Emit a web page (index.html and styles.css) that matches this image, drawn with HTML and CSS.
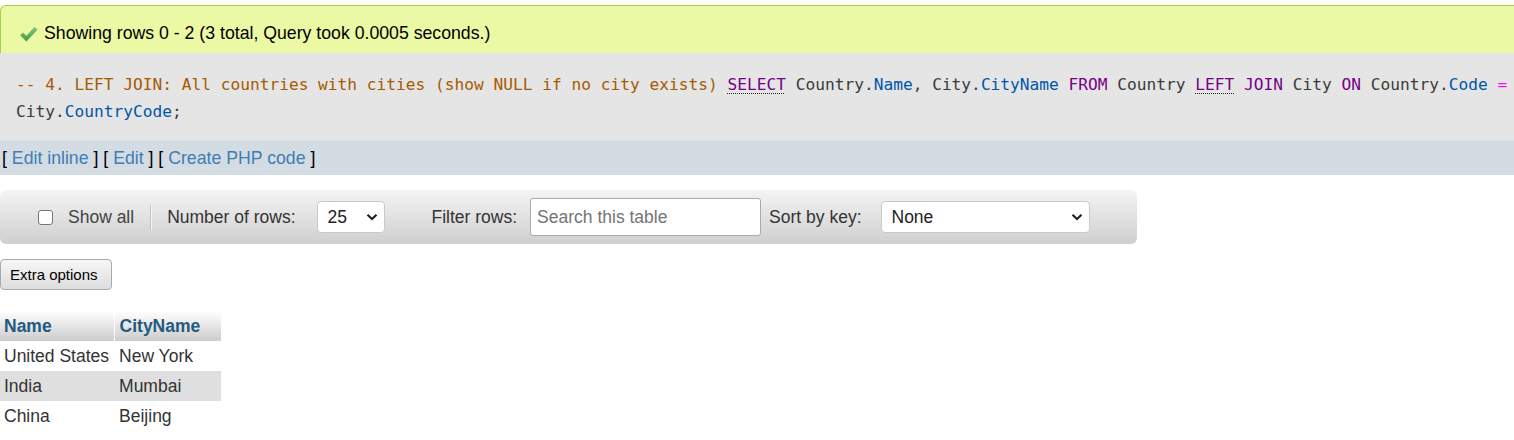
FILE: index.html
```html
<!DOCTYPE html>
<html lang="en">
<head>
<meta charset="utf-8">
<title>Query result</title>
<link rel="stylesheet" href="styles.css">
</head>
<body>
<div class="success">
  <svg class="check" width="19" height="17" viewBox="0 0 19 17" aria-hidden="true">
    <defs>
      <linearGradient id="cg" x1="0" y1="0" x2="0" y2="1">
        <stop offset="0" stop-color="#7fcf7a"/>
        <stop offset="1" stop-color="#3f9a45"/>
      </linearGradient>
    </defs>
    <path d="M1.5 9.2 L4 6.9 L7.3 10.2 L15.6 1.4 L18 3.7 L7.4 15.2 Z" fill="url(#cg)" stroke="#4a9d4c" stroke-width="0.6" stroke-linejoin="round"/>
  </svg>
  <span>Showing rows 0 - 2 (3 total, Query took 0.0005 seconds.)</span>
</div>

<div class="sql"><span class="c-comment">-- 4. LEFT JOIN: All countries with cities (show NULL if no city exists)</span> <span class="c-kw c-doc">SELECT</span> Country.<span class="c-var">Name</span>, City.<span class="c-var">CityName</span> <span class="c-kw">FROM</span> Country <span class="c-kw c-doc">LEFT</span> <span class="c-kw">JOIN</span> City <span class="c-kw">ON</span> Country.<span class="c-var">Code</span> <span class="c-op">=</span> City.<span class="c-var">CountryCode</span>;</div>

<div class="links">[ <a href="#">Edit inline</a> ] [ <a href="#">Edit</a> ] [ <a href="#">Create PHP code</a> ]</div>

<div class="navbar">
  <span class="checkbox"></span>
  <span class="lbl show-all">Show all</span>
  <span class="divider"></span>
  <span class="lbl num-rows">Number of rows:</span>
  <span class="select sel-rows"><span>25</span>
    <svg width="12" height="8" viewBox="0 0 12 8" aria-hidden="true"><path d="M1.5 1.8 L6 6 L10.5 1.8" fill="none" stroke="#222" stroke-width="2.2"/></svg>
  </span>
  <span class="lbl filter">Filter rows:</span>
  <span class="search">Search this table</span>
  <span class="lbl sortkey">Sort by key:</span>
  <span class="select sel-sort"><span>None</span>
    <svg width="12" height="8" viewBox="0 0 12 8" aria-hidden="true"><path d="M1.5 1.8 L6 6 L10.5 1.8" fill="none" stroke="#222" stroke-width="2.2"/></svg>
  </span>
</div>

<div class="extra"><span class="btn">Extra options</span></div>

<table class="result">
  <thead>
    <tr><th>Name</th><th>CityName</th></tr>
  </thead>
  <tbody>
    <tr><td>United States</td><td>New York</td></tr>
    <tr class="odd"><td>India</td><td>Mumbai</td></tr>
    <tr><td>China</td><td>Beijing</td></tr>
  </tbody>
</table>
</body>
</html>
```
FILE: styles.css
```css
html, body {
  margin: 0;
  padding: 0;
  background: #fff;
  overflow: hidden;
}
body {
  font-family: "Liberation Sans", Arial, sans-serif;
  font-size: 17.5px;
  color: #333;
}

.success {
  box-sizing: border-box;
  margin-top: 5px;
  height: 48px;
  padding: 8px 0 0 18px;
  background: #ebf8a4;
  border-top: 1px solid #a2d246;
  border-left: 1px solid #a2d246;
  border-top-left-radius: 6px;
  display: flex;
  align-items: center;
  color: #000;
  font-size: 17.7px;
}
.success .check {
  margin-right: 6px;
  margin-top: 2px;
}

.sql {
  background: #e5e5e5;
  padding: 18px 4px 16px 16px;
  font-family: "DejaVu Sans Mono", "Liberation Mono", monospace;
  font-size: 16.2px;
  line-height: 27px;
  color: #3a3a3a;
}
.c-comment { color: #a55a00; }
.c-kw { color: #770088; }
.c-var { color: #0055aa; }
.c-op { color: #ee11ee; }
.c-doc {
  text-decoration-line: underline;
  text-decoration-style: dotted;
  text-decoration-color: #222;
  text-decoration-thickness: 1px;
  text-underline-offset: 3px;
}

.links {
  background: #d3dce3;
  height: 34px;
  line-height: 34px;
  padding-left: 2px;
  color: #000;
  font-size: 17.7px;
}
.links a {
  color: #3f7db3;
  text-decoration: none;
}

.navbar {
  box-sizing: border-box;
  margin-top: 15px;
  width: 1137px;
  height: 54px;
  padding-left: 38px;
  border-radius: 6px;
  background: linear-gradient(#f4f4f4, #cfcfcf);
  display: flex;
  align-items: center;
  color: #444;
}
.checkbox {
  box-sizing: border-box;
  width: 15px;
  height: 15px;
  border: 1px solid #767676;
  border-radius: 3px;
  background: #fff;
}
.show-all { margin-left: 15px; }
.divider {
  width: 2px;
  height: 25px;
  margin-left: 16px;
  background: #b9c2ca;
  border-right: 1px solid #f6f6f6;
  box-sizing: border-box;
}
.num-rows { margin-left: 15px; color: #333; }
.select {
  box-sizing: border-box;
  height: 32px;
  background: #fff;
  border: 1px solid #c9c9c9;
  border-radius: 4px;
  display: flex;
  align-items: center;
  justify-content: space-between;
  padding: 0 6px 0 10px;
  color: #222;
}
.sel-rows { margin-left: 21px; width: 68px; }
.filter { margin-left: 47px; color: #333; }
.search {
  box-sizing: border-box;
  margin-left: 13px;
  width: 231px;
  height: 38px;
  border: 1px solid #aaa;
  border-radius: 3px;
  background: #fff;
  padding-left: 6px;
  display: flex;
  align-items: center;
  color: #757575;
}
.sortkey { margin-left: 8px; color: #333; }
.sel-sort { margin-left: 19px; width: 209px; }

.extra {
  margin-top: 15px;
  height: 31px;
}
.btn {
  box-sizing: border-box;
  display: inline-flex;
  align-items: center;
  height: 31px;
  width: 112px;
  padding-left: 9px;
  font-size: 15px;
  color: #000;
  background: linear-gradient(#f6f6f6, #dedede);
  border: 1px solid #aaa;
  border-radius: 4px;
}

.result {
  margin-top: 21px;
  border-collapse: collapse;
}
.result th {
  height: 30px;
  box-sizing: border-box;
  padding: 4px 21px 4px 4px;
  text-align: left;
  font-weight: bold;
  color: #235a81;
  background: linear-gradient(#ffffff, #cccccc);
}
.result th + th {
  border-left: 1px solid #fff;
  padding-left: 5px;
}
.result td {
  height: 30px;
  box-sizing: border-box;
  padding: 4px 5px 4px 4px;
  color: #333;
}
.result td + td { padding-left: 5px; }
.result tr.odd td { background: #dfdfdf; }
```
